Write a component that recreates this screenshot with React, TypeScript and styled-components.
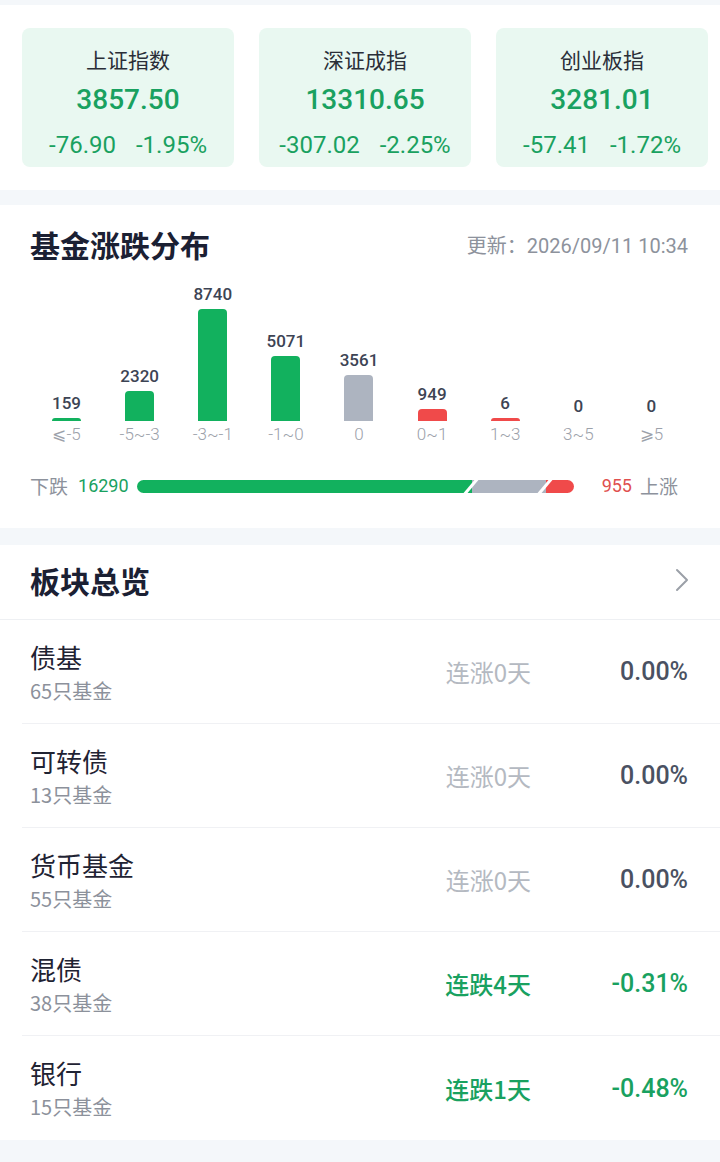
import React from 'react';
import styled, {createGlobalStyle} from 'styled-components';

const CJK = `"Noto Sans CJK SC", "Noto Sans", sans-serif`;
const NUM = `Roboto, "Noto Sans CJK SC", sans-serif`;

const GREEN = '#19a160';
const BAR_GREEN = '#12b15e';
const RED = '#f04a4a';
const GRAY_BAR = '#adb4c0';

const GlobalStyle = createGlobalStyle`
  body {
    margin: 0;
    background: #f4f7fa;
    font-family: ${CJK};
  }
`;

type Index = { name: string, value: string, change: string, pct: string };
type Bucket = { count: number, label: string, kind: 'down' | 'flat' | 'up' };
type Sector = { name: string, funds: number, streak: string, pct: string, down: boolean };

const indices: Index[] = [
    {name: '上证指数', value: '3857.50', change: '-76.90', pct: '-1.95%'},
    {name: '深证成指', value: '13310.65', change: '-307.02', pct: '-2.25%'},
    {name: '创业板指', value: '3281.01', change: '-57.41', pct: '-1.72%'},
];

const buckets: Bucket[] = [
    {count: 159, label: '⩽-5', kind: 'down'},
    {count: 2320, label: '-5~-3', kind: 'down'},
    {count: 8740, label: '-3~-1', kind: 'down'},
    {count: 5071, label: '-1~0', kind: 'down'},
    {count: 3561, label: '0', kind: 'flat'},
    {count: 949, label: '0~1', kind: 'up'},
    {count: 6, label: '1~3', kind: 'up'},
    {count: 0, label: '3~5', kind: 'up'},
    {count: 0, label: '⩾5', kind: 'up'},
];

const sectors: Sector[] = [
    {name: '债基', funds: 65, streak: '连涨0天', pct: '0.00%', down: false},
    {name: '可转债', funds: 13, streak: '连涨0天', pct: '0.00%', down: false},
    {name: '货币基金', funds: 55, streak: '连涨0天', pct: '0.00%', down: false},
    {name: '混债', funds: 38, streak: '连跌4天', pct: '-0.31%', down: true},
    {name: '银行', funds: 15, streak: '连跌1天', pct: '-0.48%', down: true},
];

const MAX_BAR = 112;

const Page = styled.div`
  width: 720px;
  padding: 5px 0 22px;
  box-sizing: border-box;
`;

const IndexPanel = styled.section`
  background: #fff;
  padding: 23px 12px 23px 22px;
  display: grid;
  grid-template-columns: repeat(3, 212px);
  column-gap: 25px;
`;

const IndexCard = styled.div`
  height: 139px;
  background: #e9f8f1;
  border-radius: 8px;
  display: flex;
  flex-direction: column;
  align-items: center;
  padding-top: 16px;
  box-sizing: border-box;
`;

const IndexName = styled.div`
  font-size: 21px;
  line-height: 30px;
  color: #2a2e38;
`;

const IndexValue = styled.div`
  margin-top: 8px;
  font-family: ${NUM};
  font-weight: 500;
  font-size: 28px;
  line-height: 36px;
  color: ${GREEN};
`;

const IndexChange = styled.div`
  margin-top: 12px;
  display: flex;
  gap: 20px;
  font-family: ${NUM};
  font-size: 24px;
  line-height: 30px;
  color: ${GREEN};
`;

const Panel = styled.section`
  background: #fff;
  margin-top: 15px;
`;

const DistPanel = styled(Panel)`
  padding-bottom: 30px;
`;

const PanelHeader = styled.div`
  display: flex;
  align-items: center;
  justify-content: space-between;
  padding: 19px 32px 0 30px;
`;

const Title = styled.h2`
  margin: 0;
  font-size: 30px;
  line-height: 40px;
  font-weight: 600;
  color: #1b2033;
`;

const UpdateTime = styled.span`
  font-size: 20px;
  color: #8d929c;
  font-family: ${NUM};

  & > em {
    font-style: normal;
    font-family: ${CJK};
  }
`;

const Chart = styled.div`
  display: grid;
  grid-template-columns: repeat(9, 1fr);
  padding: 0 32px 0 30px;
`;

const Column = styled.div`
  display: flex;
  flex-direction: column;
  align-items: center;
`;

const BarArea = styled.div`
  height: 157px;
  display: flex;
  flex-direction: column;
  align-items: center;
  justify-content: flex-end;
`;

const BarValue = styled.span`
  font-family: ${NUM};
  font-weight: 500;
  font-size: 17px;
  line-height: 22px;
  margin-bottom: 4px;
  color: #3d4454;
`;

const Bar = styled.div<{ $kind: Bucket['kind'] }>`
  width: 29px;
  border-radius: 4px 4px 0 0;
  background: ${p => p.$kind === 'down' ? BAR_GREEN : p.$kind === 'up' ? RED : GRAY_BAR};
`;

const BarLabel = styled.span`
  font-family: ${NUM}, "DejaVu Sans";
  font-weight: 300;
  font-size: 17px;
  line-height: 26px;
  color: #9ca1aa;
`;

const Ratio = styled.div`
  margin-top: 27px;
  display: flex;
  align-items: center;
  padding: 0 42px 0 30px;
  font-size: 19px;
  line-height: 24px;
  color: #8d929c;
`;

const Count = styled.span<{ $up?: boolean }>`
  font-family: ${NUM};
  font-size: 18px;
  color: ${p => p.$up ? '#e0504f' : GREEN};
  margin: ${p => p.$up ? '0 8px 0 0' : '0 0 0 10px'};
`;

const Track = styled.div`
  flex: 1;
  height: 13px;
  margin: 0 28px 0 8px;
  border-radius: 7px;
  overflow: hidden;
  display: flex;
`;

const Segment = styled.div<{ $color: string, $first?: boolean }>`
  position: relative;
  background: ${p => p.$color};
  min-width: 28px;

  &::before {
    content: '';
    display: ${p => p.$first ? 'none' : 'block'};
    position: absolute;
    left: -3px;
    top: -3px;
    bottom: -3px;
    width: 4px;
    background: #fff;
    transform: skewX(-40deg);
  }
`;

const SectorPanel = styled(Panel)`
  margin-top: 17px;
`;

const SectorHeader = styled.div`
  height: 75px;
  display: flex;
  align-items: center;
  justify-content: space-between;
  padding: 0 31px 4px 30px;
  box-sizing: border-box;
  border-bottom: 1px solid #eef0f3;
`;

const Row = styled.div`
  height: 104px;
  margin-left: 22px;
  padding: 0 32px 0 8px;
  box-sizing: border-box;
  display: flex;
  align-items: center;
  border-bottom: 1px solid #f0f1f4;

  &:last-child {
    border-bottom: none;
  }
`;

const NameBlock = styled.div`
  flex: 1;
  display: flex;
  flex-direction: column;
`;

const SectorName = styled.span`
  font-size: 26px;
  line-height: 32px;
  color: #1f2333;
`;

const FundCount = styled.span`
  margin-top: 6px;
  font-size: 20px;
  line-height: 24px;
  color: #8c919b;
`;

const Streak = styled.span<{ $down: boolean }>`
  font-size: 24px;
  color: ${p => p.$down ? GREEN : '#b4b9c1'};
  font-weight: ${p => p.$down ? 500 : 400};
`;

const Pct = styled.span<{ $down: boolean }>`
  width: 157px;
  text-align: right;
  font-family: ${NUM};
  font-weight: 500;
  font-size: 25px;
  color: ${p => p.$down ? GREEN : '#4a5162'};
`;

const Chevron = () => (
    <svg width="14" height="24" viewBox="0 0 14 24">
        <polyline points="2,2 12,12 2,22" fill="none" stroke="#9ba0a8" strokeWidth="2" strokeLinecap="round"
                  strokeLinejoin="round"/>
    </svg>
);

export default function App() {
    const max = Math.max(...buckets.map(b => b.count));
    const down = buckets.filter(b => b.kind === 'down').reduce((s, b) => s + b.count, 0);
    const flat = buckets.filter(b => b.kind === 'flat').reduce((s, b) => s + b.count, 0);
    const up = buckets.filter(b => b.kind === 'up').reduce((s, b) => s + b.count, 0);

    return (
        <Page>
            <GlobalStyle/>
            <IndexPanel>
                {indices.map(i => (
                    <IndexCard key={i.name}>
                        <IndexName>{i.name}</IndexName>
                        <IndexValue>{i.value}</IndexValue>
                        <IndexChange>
                            <span>{i.change}</span>
                            <span>{i.pct}</span>
                        </IndexChange>
                    </IndexCard>
                ))}
            </IndexPanel>

            <DistPanel>
                <PanelHeader>
                    <Title>基金涨跌分布</Title>
                    <UpdateTime><em>更新：</em>2026/09/11 10:34</UpdateTime>
                </PanelHeader>
                <Chart>
                    {buckets.map(b => {
                        const h = b.count === 0 ? 0 : Math.max(3, Math.round(b.count / max * MAX_BAR));
                        return (
                            <Column key={b.label}>
                                <BarArea>
                                    <BarValue>{b.count}</BarValue>
                                    <Bar $kind={b.kind} style={{height: h}}/>
                                </BarArea>
                                <BarLabel>{b.label}</BarLabel>
                            </Column>
                        );
                    })}
                </Chart>
                <Ratio>
                    <span>下跌</span>
                    <Count>{down}</Count>
                    <Track>
                        <Segment $color={BAR_GREEN} $first style={{flex: down}}/>
                        <Segment $color={GRAY_BAR} style={{flex: flat}}/>
                        <Segment $color={RED} style={{flex: up}}/>
                    </Track>
                    <Count $up>{up}</Count>
                    <span>上涨</span>
                </Ratio>
            </DistPanel>

            <SectorPanel>
                <SectorHeader>
                    <Title>板块总览</Title>
                    <Chevron/>
                </SectorHeader>
                {sectors.map(s => (
                    <Row key={s.name}>
                        <NameBlock>
                            <SectorName>{s.name}</SectorName>
                            <FundCount>{s.funds}只基金</FundCount>
                        </NameBlock>
                        <Streak $down={s.down}>{s.streak}</Streak>
                        <Pct $down={s.down}>{s.pct}</Pct>
                    </Row>
                ))}
            </SectorPanel>
        </Page>
    );
}
